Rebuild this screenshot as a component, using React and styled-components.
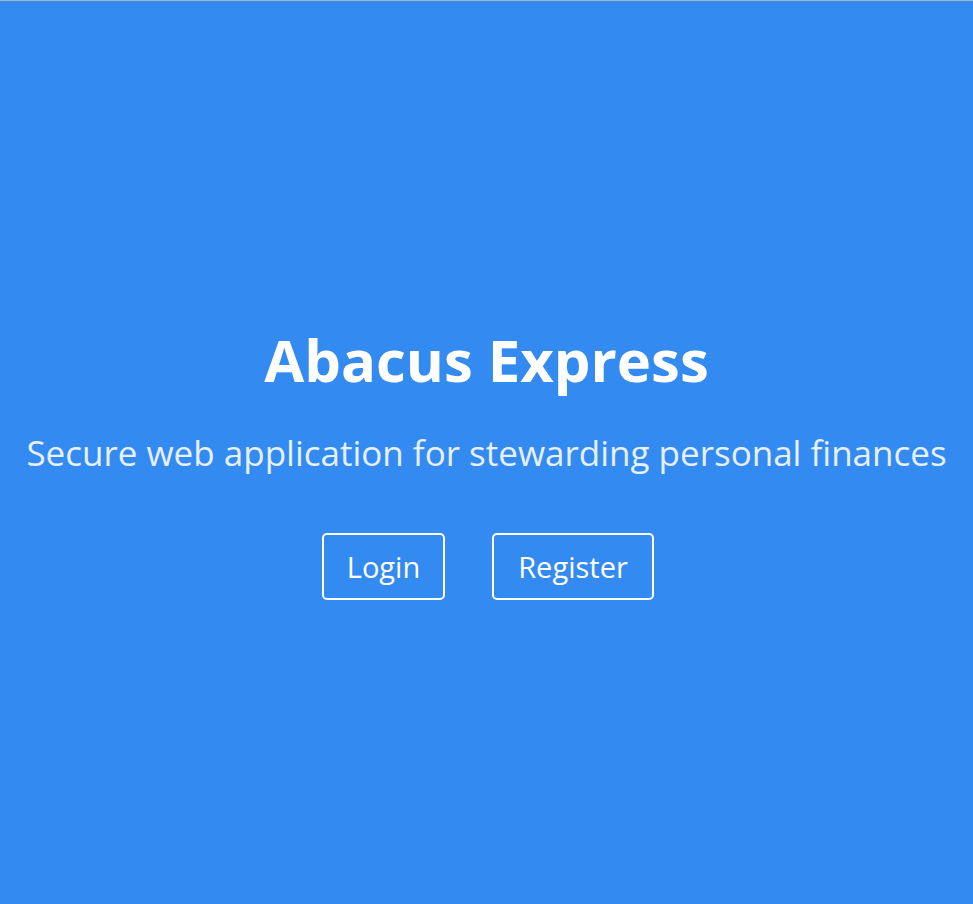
import React from "react";
import styled, { createGlobalStyle } from "styled-components";

const Global = createGlobalStyle`
  html, body { margin: 0; padding: 0; height: 100%; }
  body { font-family: "Open Sans", "Noto Sans", sans-serif; background: #338bf2; }
  * { box-sizing: border-box; }
`;

const Page = styled.main`
  min-height: 904px;
  background: #338bf2;
  border-top: 1px solid #a9b4c2;
  display: flex;
  flex-direction: column;
  align-items: center;
  justify-content: center;
  padding-top: 20px;
  color: #fff;
`;

const Title = styled.h1`
  margin: 0;
  font-size: 58px;
  font-weight: 700;
  line-height: 1.2;
  letter-spacing: 0;
`;

const Subtitle = styled.p`
  margin: 37px 0 0;
  font-size: 35px;
  font-weight: 400;
  line-height: 1.25;
  color: #e6f0ff;
`;

const Actions = styled.div`
  display: flex;
  gap: 47px;
  margin-top: 58px;
  padding-left: 3px;
`;

const Button = styled.a`
  display: inline-flex;
  align-items: center;
  justify-content: center;
  height: 67px;
  width: ${(p) => p.$w}px;
  border: 2px solid #fff;
  border-radius: 5px;
  color: #fff;
  font-size: 29px;
  text-decoration: none;
  cursor: pointer;
`;

export default function App() {
  return (
    <>
      <Global />
      <Page>
        <Title>Abacus Express</Title>
        <Subtitle>Secure web application for stewarding personal finances</Subtitle>
        <Actions>
          <Button $w={123}>Login</Button>
          <Button $w={162}>Register</Button>
        </Actions>
      </Page>
    </>
  );
}
